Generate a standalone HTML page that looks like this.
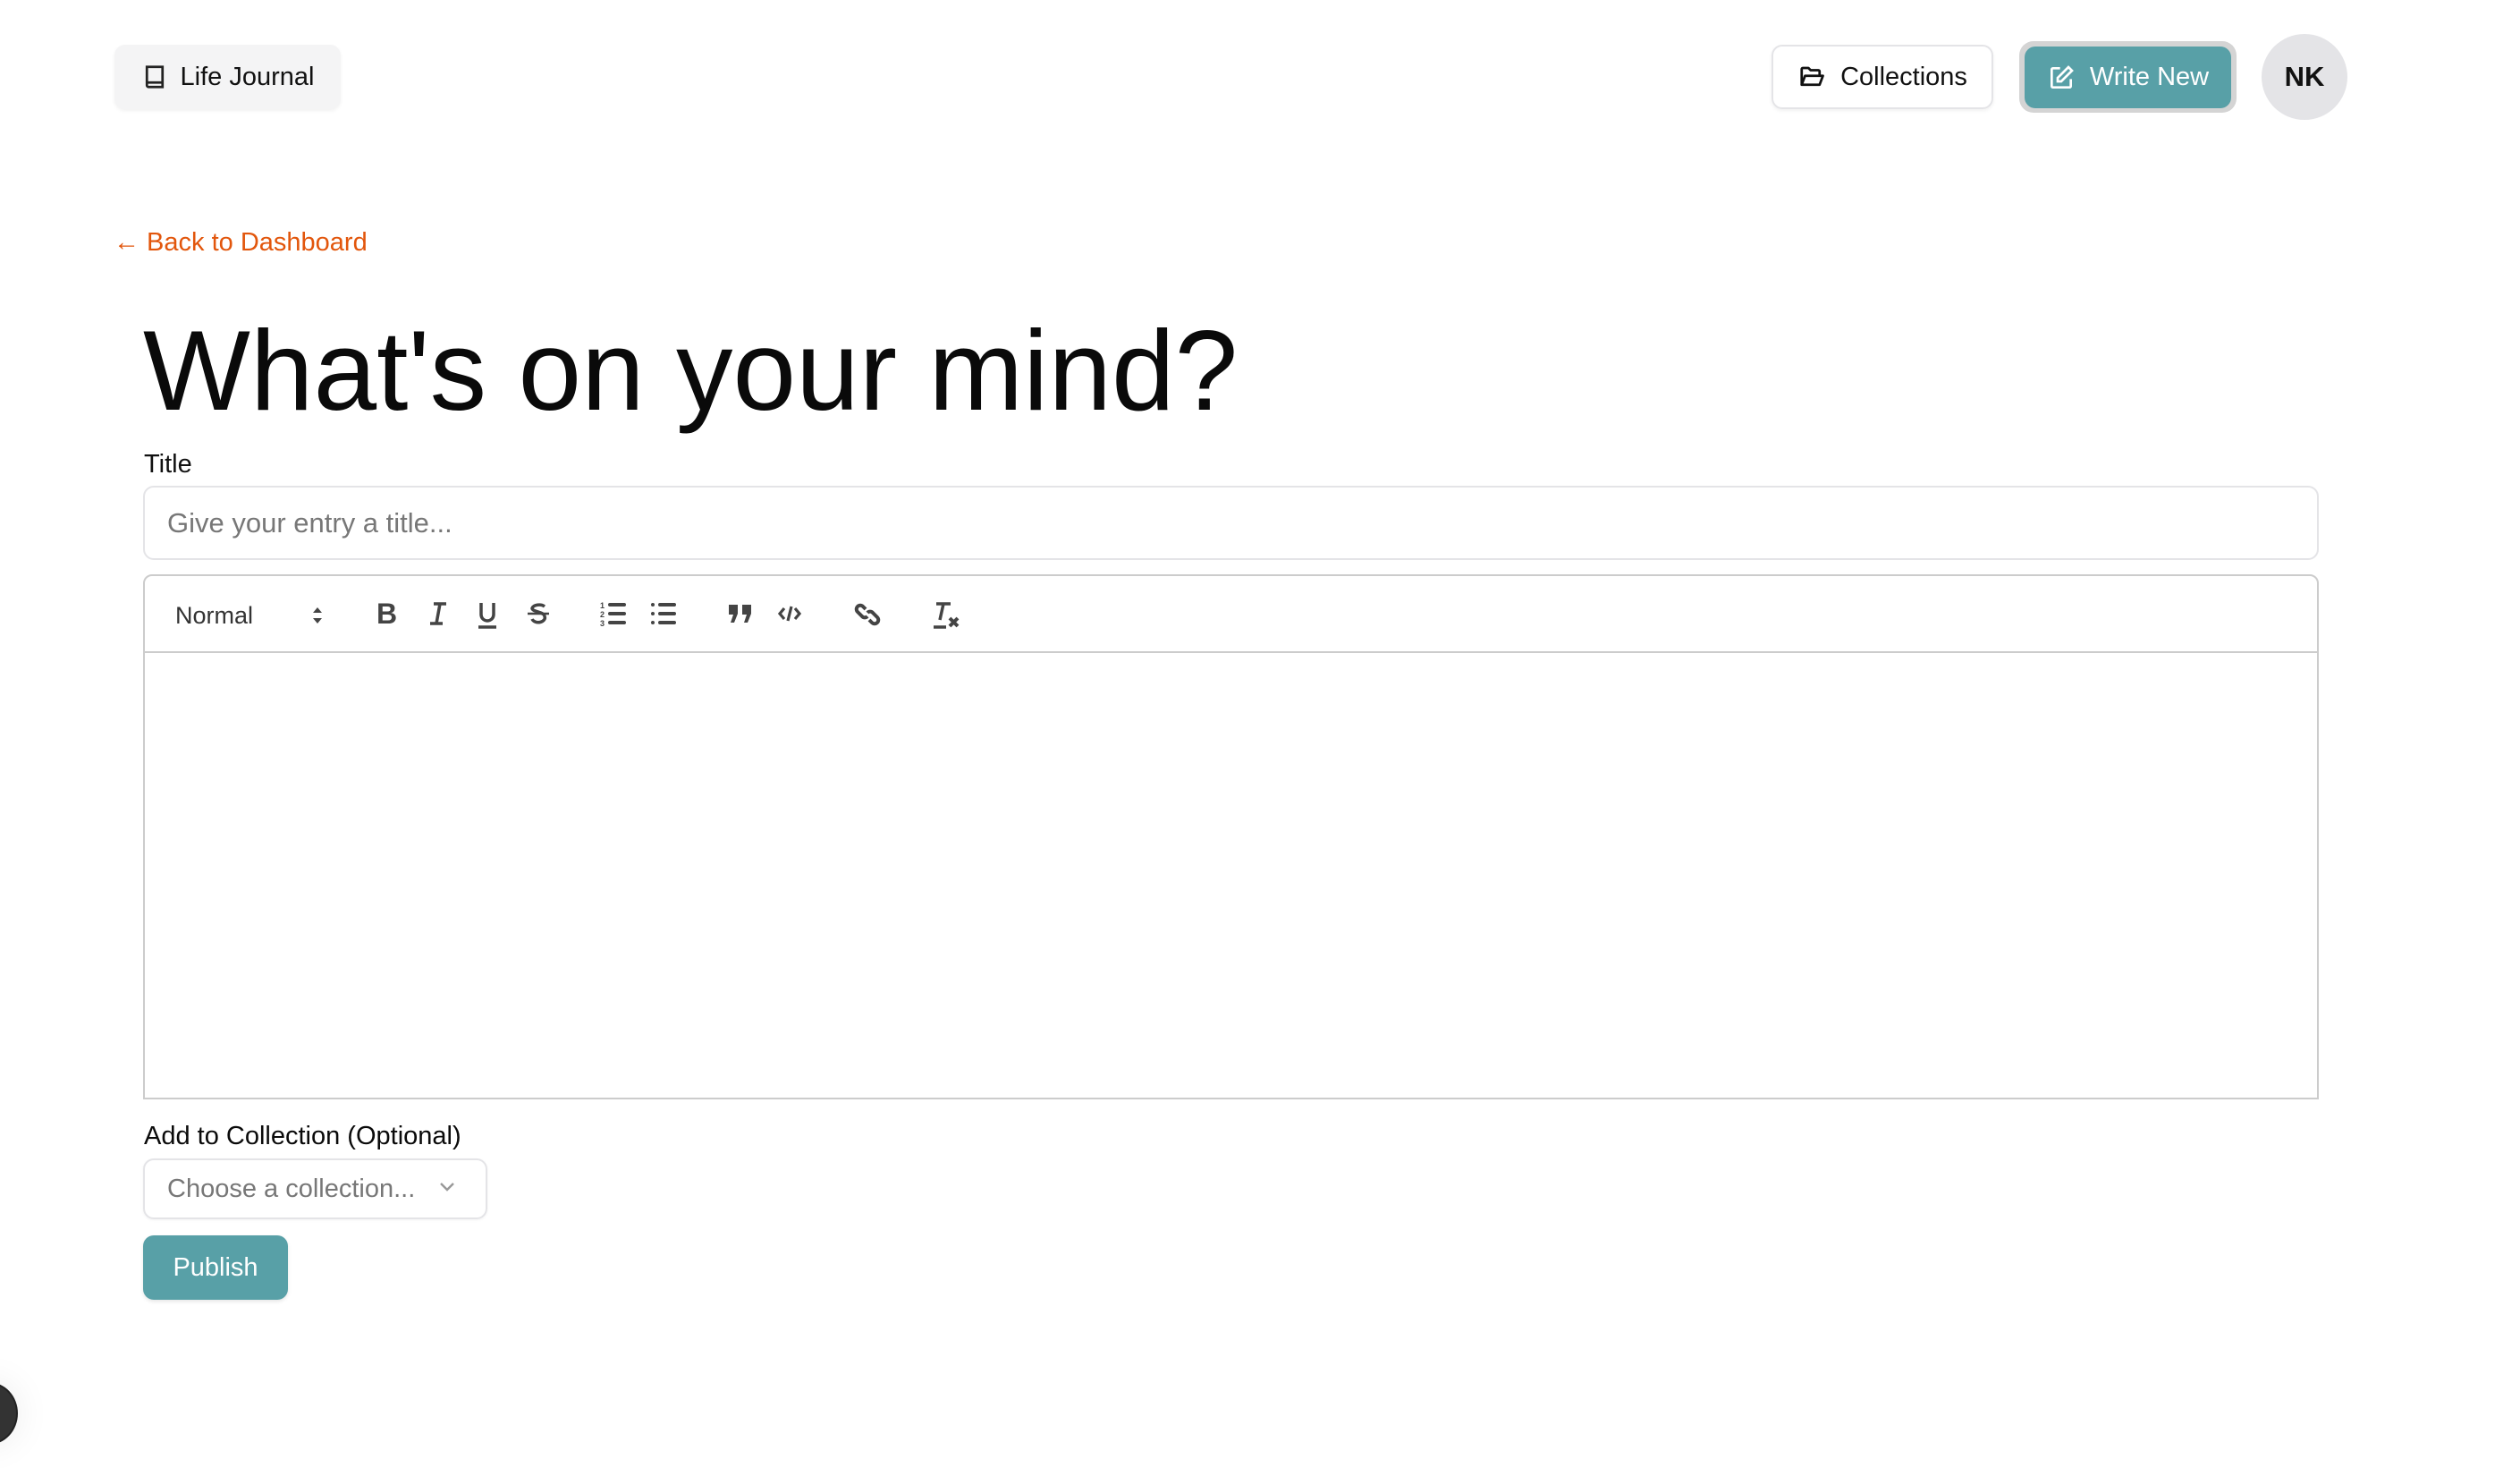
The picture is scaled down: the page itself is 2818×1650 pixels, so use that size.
<!DOCTYPE html>
<html><head><meta charset="utf-8"><style>
*{box-sizing:border-box;margin:0;padding:0}
body{width:2818px;height:1650px;background:#fff;font-family:"Liberation Sans",sans-serif;color:#111;position:relative;overflow:hidden}
.abs{position:absolute}
.btn{display:flex;align-items:center;justify-content:center;font-size:29px}
svg{display:block}
.ic{position:absolute;top:671px}
</style></head><body>
<div class="abs btn" style="left:128px;top:50px;width:253px;height:72px;background:#f4f4f5;border-radius:12px;box-shadow:0 2px 4px rgba(0,0,0,.06);gap:14px">
<svg width="30" height="32" viewBox="0 0 24 24" fill="none" stroke="#222" stroke-width="2.2"><path d="M5 3h14v18H6.5A1.5 1.5 0 0 1 5 19.5z"/><path d="M5 17h14"/></svg><span>Life Journal</span></div>

<div class="abs btn" style="left:1981px;top:50px;width:248px;height:72px;border:2px solid #e4e4e7;border-radius:12px;box-shadow:0 2px 4px rgba(0,0,0,.06);gap:16px">
<svg width="32" height="30" viewBox="0 0 24 24" fill="none" stroke="#111" stroke-width="2.2" stroke-linejoin="round"><path d="M3 19V5a1 1 0 0 1 1-1h5l2 2h7a1 1 0 0 1 1 1v3"/><path d="M3 19l3-8h16l-3 8z"/></svg><span>Collections</span></div>

<div class="abs" style="left:2258px;top:46px;width:243px;height:80px;background:#d4d4d4;border-radius:16px"></div>
<div class="abs btn" style="left:2264px;top:52px;width:231px;height:69px;background:#58a0a7;border-radius:12px;color:#fff;gap:16px">
<svg width="32" height="32" viewBox="0 0 24 24" fill="none" stroke="#fff" stroke-width="2"><path d="M11 4H5a1 1 0 0 0-1 1v14a1 1 0 0 0 1 1h14a1 1 0 0 0 1-1v-6"/><path d="M18 3l3 3-9 9H9v-3z"/></svg><span>Write New</span></div>

<div class="abs btn" style="left:2529px;top:38px;width:96px;height:96px;border-radius:50%;background:#e4e4e7;font-weight:bold;font-size:31px">NK</div>

<div class="abs" style="left:127px;top:255px;font-size:29px;color:#e2560c">← Back to Dashboard</div>

<div class="abs" style="left:160px;top:351px;font-size:127px;color:#0a0a0a;line-height:1">What's on your mind?</div>

<div class="abs" style="left:161px;top:503px;font-size:29px">Title</div>
<div class="abs" style="left:160px;top:543px;width:2433px;height:83px;border:2px solid #e4e4e7;border-radius:12px;padding-left:25px;line-height:79px;font-size:31px;color:#777">Give your entry a title...</div>

<div class="abs" style="left:160px;top:642px;width:2433px;height:88px;border:2px solid #ccc;border-radius:10px 10px 0 0"></div>
<div class="abs" style="left:160px;top:728px;width:2433px;height:501px;border:2px solid #ccc;border-top:none"></div>

<div class="abs" style="left:196px;top:673px;font-size:27px;color:#333">Normal</div>
<svg class="ic" style="left:347px;top:674px" width="16" height="28" viewBox="0 0 16 28"><path d="M8 5l5 6H3zM8 23l5-6H3z" fill="#444"/></svg>
<div class="abs" style="left:421px;top:668px;font-size:32px;font-weight:bold;color:#444">B</div>
<svg class="ic" style="left:477px" width="26" height="30" viewBox="0 0 26 30" stroke="#444" stroke-width="3.5" fill="none"><path d="M8 4h14M4 26h14M15 4l-4 22"/></svg>
<svg class="ic" style="left:532px" width="26" height="32" viewBox="0 0 26 32" stroke="#444" stroke-width="3.5" fill="none"><path d="M6 3v13a7 7 0 0 0 14 0V3M3 30h20"/></svg>
<svg class="ic" style="left:588px" width="28" height="30" viewBox="0 0 28 30" stroke="#444" stroke-width="3.5" fill="none"><path d="M21 7a8 5 0 0 0-14 2c0 4 14 4 14 9a7 5 0 0 1-14 3"/><path d="M2 15h24" stroke-width="2.5"/></svg>
<svg class="ic" style="left:671px" width="30" height="30" viewBox="0 0 30 30" fill="#444"><text x="0" y="9" font-size="9" font-weight="bold" font-family="Liberation Sans">1</text><text x="0" y="19" font-size="9" font-weight="bold" font-family="Liberation Sans">2</text><text x="0" y="29" font-size="9" font-weight="bold" font-family="Liberation Sans">3</text><rect x="9" y="3" width="20" height="4" rx="2"/><rect x="9" y="13" width="20" height="4" rx="2"/><rect x="9" y="23" width="20" height="4" rx="2"/></svg>
<svg class="ic" style="left:727px" width="30" height="30" viewBox="0 0 30 30" fill="#444"><circle cx="3" cy="5" r="2"/><circle cx="3" cy="15" r="2"/><circle cx="3" cy="25" r="2"/><rect x="9" y="3" width="20" height="4" rx="2"/><rect x="9" y="13" width="20" height="4" rx="2"/><rect x="9" y="23" width="20" height="4" rx="2"/></svg>
<svg class="ic" style="left:814px" width="28" height="30" viewBox="0 0 28 30" fill="#444"><path d="M1 5h10v10l-4 10H3l3-9H1zM16 5h10v10l-4 10h-4l3-9h-5z"/></svg>
<svg class="ic" style="left:869px" width="28" height="30" viewBox="0 0 28 30" stroke="#444" stroke-width="3.2" fill="none"><path d="M8 9l-5 6 5 6M20 9l5 6-5 6M16 7l-4 16"/></svg>
<svg class="ic" style="left:954px" width="32" height="32" viewBox="0 0 32 32" stroke="#444" stroke-width="4" fill="none"><path d="M14 10l-3-3a4 4 0 0 0-6 6l5 5a4 4 0 0 0 6 0"/><path d="M18 22l3 3a4 4 0 0 0 6-6l-5-5a4 4 0 0 0-6 0"/></svg>
<svg class="ic" style="left:1041px" width="32" height="32" viewBox="0 0 32 32" fill="none" stroke="#444"><path d="M6 4h16M14 4l-4 18M3 30h14" stroke-width="3.5"/><path d="M21 20l9 9M30 20l-9 9" stroke-width="4"/></svg>

<div class="abs" style="left:161px;top:1254px;font-size:29px;color:#0a0a0a">Add to Collection (Optional)</div>
<div class="abs" style="left:160px;top:1295px;width:385px;height:68px;border:2px solid #e4e4e7;border-radius:12px;box-shadow:0 1px 3px rgba(0,0,0,.05);padding-left:25px;line-height:64px;font-size:29px;color:#777">Choose a collection...</div>
<svg class="abs" style="left:490px;top:1320px" width="20" height="14" viewBox="0 0 20 14" stroke="#999" stroke-width="2.4" fill="none"><path d="M3 3l7 7 7-7"/></svg>

<div class="abs btn" style="left:160px;top:1381px;width:162px;height:72px;background:#58a0a7;border-radius:12px;color:#fff;font-size:29px;box-shadow:0 2px 4px rgba(0,0,0,.1)">Publish</div>

<div class="abs" style="left:-45px;top:1545px;width:65px;height:70px;border-radius:50%;background:#333;border:2px solid #222;box-shadow:0 0 40px rgba(0,0,0,.08)"></div>
</body></html>
